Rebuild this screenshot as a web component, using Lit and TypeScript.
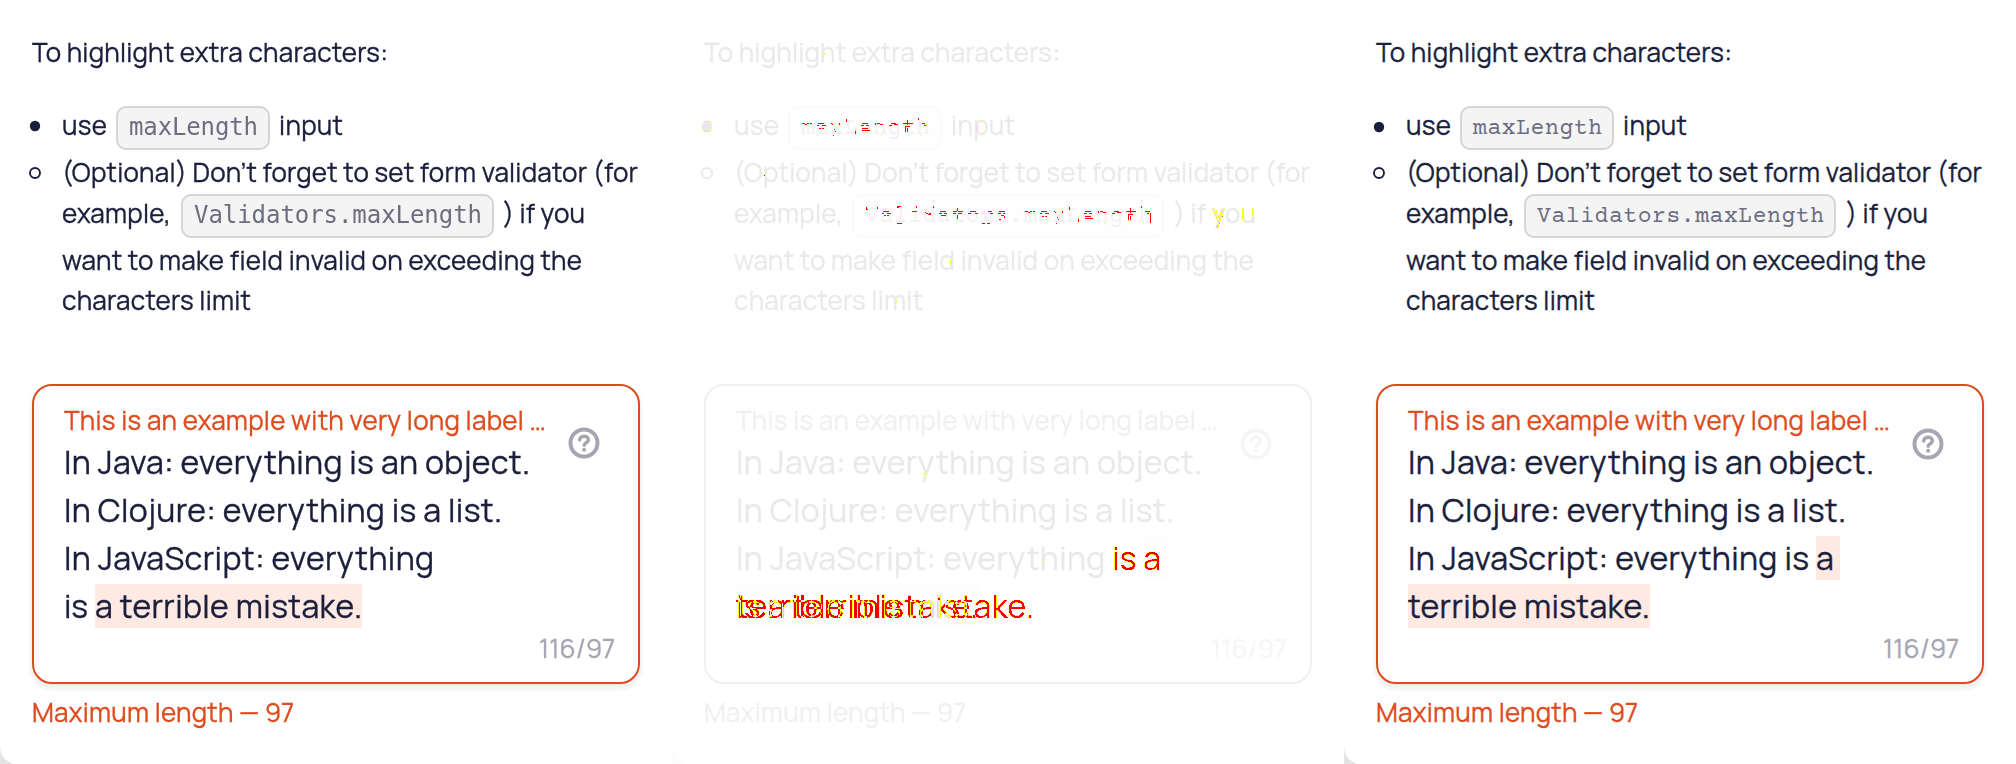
import { LitElement, html, css, svg, nothing } from "lit";
import { customElement, property } from "lit/decorators.js";

type Seg = { t: string; a: number; b: number; kind?: "code" | "mark" };

/* Text set to an exact measure by spreading its letter spacing. */
@customElement("fit-text")
class FitText extends LitElement {
  @property() text = "";
  @property({ type: Number }) measure = 0;
  static styles = css`
    :host { display: block; white-space: pre; flex: none; }
    .t { display: inline-block; }
  `;
  render() {
    return html`<span class="t">${this.text}</span>`;
  }
  updated() {
    const s = this.renderRoot.querySelector(".t") as HTMLElement;
    this.style.width = this.measure + "px";
    s.style.letterSpacing = "0px";
    const natural = s.getBoundingClientRect().width;
    const gaps = Math.max(1, this.text.length - 1);
    s.style.letterSpacing = (this.measure - natural) / gaps + "px";
  }
}

@customElement("doc-panel")
class DocPanel extends LitElement {
  @property() variant = "before";
  static styles = css`
    :host { display: block; width: 672px; height: 764px; flex: none; }
    .panel {
      box-sizing: border-box; height: 764px; padding: 33px 32px 0;
      font: 400 26px/38px Manrope, Inter, sans-serif; color: #1b1f3b;
      -webkit-text-stroke-width: 0.35px;
      background: #fff; border-bottom-left-radius: 17px;
    }
    .row { display: flex; align-items: flex-start; height: 40px; }
    .list { margin-top: 33px; }
    .code-row { height: 44px; }
    .gap { margin-top: 3px; }
    .tight { margin-top: 1px; }
    .code {
      box-sizing: border-box; height: 44px; border: 2px solid #d5d5d5; border-radius: 10px;
      background: #f4f4f4; color: #6c6d80; padding-left: 11px;
      font: 24px/39px "DejaVu Sans Mono", monospace; display: flex;
      -webkit-text-stroke-width: 0;
    }
    .after .code { font: 23px/43px "Courier Prime", "Liberation Mono", monospace; }
    .bullet { flex: none; width: 12px; height: 12px; margin: 14px 21px 0 -3px; }
    .after .filled { margin-top: 15px; }
    .field {
      box-sizing: border-box; height: 300px; margin-top: 63px; border: 2px solid #dd4c1e;
      border-radius: 20px; padding: 18px 24px 0 30px; position: relative;
      box-shadow: 0 4px 6px rgba(0, 0, 0, 0.09);
    }
    .label { height: 34px; line-height: 32px; color: #dd4c1e; }
    .line { height: 48px; font-size: 32px; line-height: 48px; }
    .mark { background: #ffeae3; height: 44px; line-height: 44px; margin-top: 2px; }
    .counter { height: 32px; line-height: 32px; margin: 2px -1px 0 0; color: #a5a6b2; justify-content: flex-end; }
    .help { position: absolute; left: 534px; top: 41px; width: 32px; height: 32px; }
    .after .help { top: 42px; }
    .error { margin-top: 9px; color: #dd4c1e; }
  `;

  row(cls: string, segs: Seg[], start = 32, bullet: unknown = nothing) {
    let x = start;
    return html`<div class="row ${cls}">${bullet}${segs.map((s) => {
      const m = s.a - x;
      x = s.b;
      if (s.kind === "code")
        return html`<div class="code" style="width:${s.b - s.a}px;margin-left:${m}px">
          <fit-text .text=${s.t} .measure=${s.b - s.a - 25}></fit-text></div>`;
      return html`<fit-text class=${s.kind ?? ""} style="margin-left:${m}px" .text=${s.t} .measure=${s.b - s.a}></fit-text>`;
    })}</div>`;
  }

  render() {
    const after = this.variant === "after";
    const filled = html`<svg class="bullet filled" viewBox="0 0 12 12"><circle cx="6" cy="6" r="5.2" fill="#1b1f3b"/></svg>`;
    const ring = html`<svg class="bullet" viewBox="0 0 12 12"><circle cx="6" cy="6" r="5" fill="none" stroke="#1b1f3b" stroke-width="1.9"/></svg>`;
    return html`<div class="panel ${this.variant}">
      ${this.row("", [{ t: "To highlight extra characters:", a: 32, b: 388 }])}
      ${this.row("list code-row", [
        { t: "use", a: 62, b: 107 },
        { t: "maxLength", a: 116, b: 270, kind: "code" },
        { t: "input", a: 279, b: 343 },
      ], 62, filled)}
      ${this.row("gap", [{ t: "(Optional) Don’t forget to set form validator (for", a: 62, b: 638 }], 62, ring)}
      ${this.row("tight code-row", [
        { t: "example,", a: 62, b: 171 },
        { t: "Validators.maxLength", a: after ? 180 : 181, b: after ? 492 : 494, kind: "code" },
        { t: ") if you", a: after ? 502 : 503, b: after ? 584 : 585 },
      ])}
      ${this.row("gap", [{ t: "want to make field invalid on exceeding the", a: 62, b: 582 }])}
      ${this.row("", [{ t: "characters limit", a: 62, b: 251 }])}
      <div class="field">
        ${this.row("label", [{ t: "This is an example with very long label …", a: 64, b: 546 }], 64)}
        ${this.row("line", [{ t: "In Java: everything is an object.", a: 64, b: 530 }], 64)}
        ${this.row("line", [{ t: "In Clojure: everything is a list.", a: 64, b: 502 }], 64)}
        ${after
          ? html`${this.row("line", [
              { t: "In JavaScript: everything is", a: 64, b: 465 },
              { t: "a ", a: 472, b: 496, kind: "mark" },
            ], 64)}
            ${this.row("line", [{ t: "terrible mistake.", a: 64, b: 306, kind: "mark" }], 64)}`
          : html`${this.row("line", [{ t: "In JavaScript: everything", a: 64, b: 434 }], 64)}
            ${this.row("line", [
              { t: "is", a: 64, b: 88 },
              { t: "a terrible mistake.", a: 95, b: 362, kind: "mark" },
            ], 64)}`}
        <div class="row counter"><fit-text .text=${"116/97"} .measure=${76}></fit-text></div>
        <svg class="help" viewBox="-16 -16 32 32" fill="none" stroke="#a5a6b2">
          <circle r="13.5" stroke-width="3.9"/>
          <path d="M-4.4-3.1C-4-7.8 4.4-8 4.4-3C4.4-.3 .2-.4 .2 2.3" stroke-width="3.5" stroke-linecap="round"/>
          <circle cx=".1" cy="6.7" r="2" fill="#a5a6b2" stroke="none"/>
        </svg>
      </div>
      ${this.row("error", [{ t: "Maximum length — 97", a: 32, b: 294 }])}
    </div>`;
  }
}

/* x, y, w, h in thirds of a pixel. */
const MAX_LENGTH = [
  [66,69,9,3],[75,72,6,3],[81,69,6,3],[90,69,6,3],[114,69,18,3],[111,75,6,3],[126,75,12,3],[117,84,6,3],[126,84,6,3],
  [153,69,3,3],[156,72,3,3],[177,69,3,6],[162,87,3,3],[165,93,3,3],[159,105,3,3],[198,57,3,9],[225,93,3,9],
  [246,69,18,3],[243,75,9,3],[258,75,9,3],[246,84,18,3],[246,90,24,3],[285,69,3,6],[291,69,9,3],[300,72,9,3],
  [333,69,15,3],[327,75,9,3],[342,72,12,3],[381,60,3,15],[369,69,12,3],[384,69,15,3],[375,78,15,3],[375,82,3,15],
  [381,84,3,12],[414,54,3,6],[426,69,9,3],[432,75,6,3],
];
const VALIDATORS = [
  [48,51,3,9],[51,57,3,3],[81,51,3,6],[99,63,18,3],[96,69,6,3],[111,69,12,3],[102,75,6,3],[111,75,6,3],
  [141,48,12,3],[141,51,6,3],[141,99,15,3],[186,63,15,3],[198,48,3,6],[228,69,6,3],[237,69,6,3],[225,66,3,3],[233,72,9,3],
  [249,48,3,6],[270,63,18,3],[267,69,9,3],[282,69,9,3],[273,75,15,3],[309,63,12,3],[324,63,15,3],[309,69,9,3],[324,69,12,3],
  [321,54,3,9],[321,75,3,12],[360,63,18,3],[354,69,9,3],[375,69,9,3],[396,99,9,3],[411,99,9,3],[414,63,12,3],[420,69,9,3],
  [447,63,18,3],[444,69,9,3],[459,69,6,3],[453,75,9,3],[462,78,3,6],[447,87,6,3],
];
const YELLOW_CODE = [[174,75,3,3],[168,81,3,3],[225,90,3,3],[264,69,3,3],[303,105,3,3],[378,60,3,3],[375,96,3,3],[435,72,6,3],[420,105,3,3]];

@customElement("diff-layer")
class DiffLayer extends LitElement {
  static styles = css`
    :host { display: block; }
    svg { display: block; overflow: visible; }
    .multiply { mix-blend-mode: multiply; isolation: isolate; }
    .xor { mix-blend-mode: difference; fill: #0ff; }
    text { font: 400 32px Manrope, Inter, sans-serif; white-space: pre; }
    .red { fill: #f00; }
    .yellow { fill: #ff0; }
    .stroke { fill: none; stroke: #ff0; stroke-width: 1; }
  `;
  dots(list: number[][], dx: number, dy: number, cls: string) {
    return svg`<g class=${cls} shape-rendering="crispEdges" transform="translate(${dx} ${dy}) scale(.33333)">
      ${list.map((r) => svg`<rect x=${r[0]} y=${r[1]} width=${r[2]} height=${r[3]}/>`)}</g>`;
  }
  line(t: string, x: number, y: number, w: number) {
    return svg`<text class="xor" x=${x} y=${y} textLength=${w}>${t}</text>`;
  }
  render() {
    return html`<svg width="672" height="764" viewBox="0 0 672 764">
      <filter id="edges" filterUnits="userSpaceOnUse" x="60" y="540" width="440" height="90" color-interpolation-filters="sRGB">
        <feComponentTransfer>
          <feFuncG type="discrete" tableValues="0 0 1 1 1"/>
          <feFuncB type="discrete" tableValues="0 0 0 0 1"/>
        </feComponentTransfer>
      </filter>
      <g class="multiply" filter="url(#edges)">
        <rect x="60" y="540" width="440" height="90" fill="#fff"/>
        ${this.line("is a", 440, 570, 49)}
        ${this.line("is a terrible mistake.", 64, 618, 298)}
        ${this.line("terrible mistake.", 64, 618, 242)}
      </g>
      ${this.dots(MAX_LENGTH, 108, 100, "red")}
      ${this.dots(YELLOW_CODE, 108, 100, "yellow")}
      ${this.dots(VALIDATORS, 178, 190, "red")}
      ${this.dots(MAX_LENGTH, 331, 188, "red")}
      ${this.dots(YELLOW_CODE, 331, 188, "yellow")}
      <g shape-rendering="crispEdges">
        <path class="red" d="M478 213h1v10h-1zM476 211h2v1h-2z"/>
        <path class="yellow" d="M32 121h6v1h-6zM31 122h1v1h-1zM38 122h1v1h-1zM32 131h6v1h-6zM31 130h1v1h-1zM38 130h1v1h-1zM305 125h1v6h-1zM278 260h1v5h-1zM507 262h1v1h-1zM224 300h1v2h-1zM152 53h1v2h-1zM92 174h1v2h-1zM252 473h1v2h-1zM372 559h1v2h-1z"/>
        <path class="red" d="M92 175h1v1h-1zM546 217h1v1h-1zM548 219h1v1h-1zM550 216h1v1h-1zM547 222h1v2h-1zM545 226h1v1h-1zM580 216h1v1h-1z"/>
      </g>
      <path class="stroke" d="M541 209l5 12M543.5 209l4 10M552.5 209l-7 19M550 209l-3 9M570.5 209v9q0 2 2 3M580.5 209v8"/>
    </svg>`;
  }
}

@customElement("app-root")
class AppRoot extends LitElement {
  static styles = css`
    :host { display: block; width: 2016px; height: 764px; overflow: hidden; }
    .board { display: flex; height: 764px; background: #fff; }
    .cell { width: 672px; height: 764px; background: #e3e3e3; position: relative; }
    .middle { background: #fff; }
    .ghost { filter: grayscale(1) opacity(0.1); background: #e3e3e3; }
    .over { position: absolute; inset: 0; }
  `;
  render() {
    return html`<div class="board">
      <div class="cell"><doc-panel variant="before"></doc-panel></div>
      <div class="cell middle">
        <div class="ghost"><doc-panel variant="after"></doc-panel></div>
        <diff-layer class="over"></diff-layer>
      </div>
      <div class="cell"><doc-panel variant="after"></doc-panel></div>
    </div>`;
  }
}
